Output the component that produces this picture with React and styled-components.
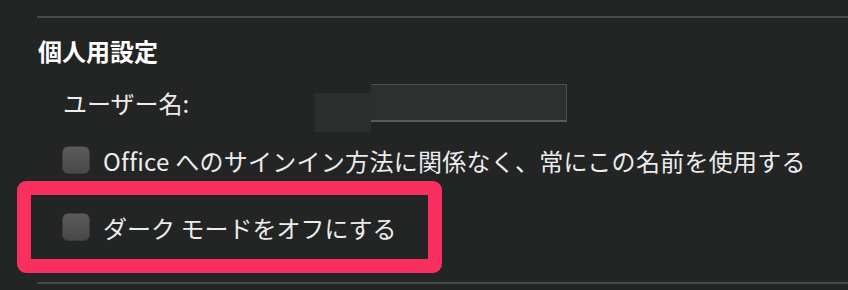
import React from "react";
import styled, { createGlobalStyle } from "styled-components";

const GlobalStyle = createGlobalStyle`
  html, body {
    margin: 0;
    padding: 0;
    background: #232424;
  }
  body {
    font-family: "Noto Sans CJK JP", "Noto Sans", sans-serif;
  }
`;

const Page = styled.div`
  width: 848px;
  height: 290px;
  overflow: hidden;
  background: #232424;
  padding-top: 16px;
  box-sizing: border-box;
  display: flex;
  flex-direction: column;
`;

const Divider = styled.div`
  height: 2px;
  margin-left: 37px;
  margin-top: ${(p) => p.$top || 0}px;
  background: #484949;
  flex-shrink: 0;
`;

const Heading = styled.div`
  margin: 19px 0 0 38px;
  font-size: 24px;
  line-height: 28px;
  font-weight: 700;
  color: #ffffff;
`;

const FieldRow = styled.div`
  display: flex;
  align-items: flex-start;
  margin: 19px 0 0 63px;
`;

const Label = styled.div`
  width: 252px;
  font-size: 24px;
  line-height: 38px;
  color: #ececec;
`;

const Redact = styled.div`
  width: 56px;
  height: 39px;
  margin-top: 9px;
  background: #2d2e2e;
`;

const Input = styled.div`
  width: 196px;
  height: 38px;
  box-sizing: border-box;
  background: #2e2f2f;
  border: 1px solid #4e4f4f;
  border-bottom: 2px solid #5a5b5b;
  border-left: none;
`;

const CheckRow = styled.label`
  display: flex;
  align-items: center;
  gap: 13px;
  margin-left: ${(p) => p.$indent || 0}px;
  margin-top: ${(p) => p.$top || 0}px;
  height: 28px;
  font-size: 24px;
  letter-spacing: ${(p) => p.$spacing || 0}px;
  color: #ececec;
  white-space: nowrap;
`;

const Box = styled.span`
  width: 28px;
  height: 28px;
  border-radius: 6px;
  box-sizing: border-box;
  background: linear-gradient(#5b5b5b, #484848);
  border: 1px solid #3c3c3c;
  flex-shrink: 0;
`;

const Highlight = styled.div`
  width: 425px;
  height: 92px;
  box-sizing: border-box;
  margin: 7px 0 0 17px;
  border: 14px solid #f9305f;
  border-radius: 9px;
  display: flex;
  align-items: center;
  padding-left: 31px;
`;

export default function App() {
  return (
    <>
      <GlobalStyle />
      <Page>
        <Divider />
        <Heading>個人用設定</Heading>
        <FieldRow>
          <Label>ユーザー名:</Label>
          <Redact />
          <Input />
        </FieldRow>
        <CheckRow $indent={62} $top={14} $spacing={0.27}>
          <Box />
          Office へのサインイン方法に関係なく、常にこの名前を使用する
        </CheckRow>
        <Highlight>
          <CheckRow>
            <Box />
            ダーク モードをオフにする
          </CheckRow>
        </Highlight>
        <Divider $top={9} />
      </Page>
    </>
  );
}
